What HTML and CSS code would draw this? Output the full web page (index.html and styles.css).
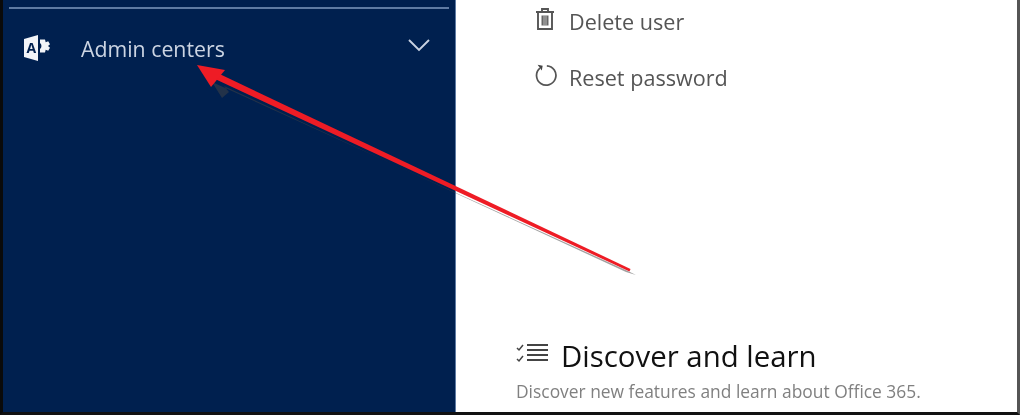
FILE: index.html
```html
<!DOCTYPE html>
<html lang="en">
<head>
<meta charset="utf-8">
<title>Admin centers</title>
<link rel="stylesheet" href="styles.css">
</head>
<body>
<div class="frame">
  <aside class="sidebar">
    <div class="divider"></div>
    <div class="nav-row">
      <svg class="nav-icon" width="30" height="30" viewBox="0 0 30 30">
        <path d="M1 6 L15 2 V28 L1 24 Z" fill="#f2f4f8"/>
        <text x="3.500" y="20" class="a-letter">A</text>
        <path d="M17 6.500h5l.7 2.800 2.500-1 1.800 3-2 1.700 2 1.700-1.800 3-2.500-1-.7 2.800h-5v-3.500a3.800 3.800 0 0 0 0-6z" fill="#f2f4f8"/>
      </svg>
      <span class="nav-label">Admin centers</span>
      <svg class="chevron" width="24" height="14" viewBox="0 0 24 14">
        <path d="M2 2 L12 12 L22 2" fill="none" stroke="#c9d2e2" stroke-width="1.900"/>
      </svg>
    </div>
  </aside>
  <main class="content">
    <ul class="actions">
      <li class="action">
        <span class="action-icon">
          <svg width="22" height="26" viewBox="0 0 22 26">
            <path d="M2 6h18M8 6V3h6v3M4 6v17h14V6" fill="none" stroke="#555" stroke-width="1.900"/>
            <path d="M7.500 9.500h7v10h-7z" fill="#666"/>
            <path d="M10 9.500v10M12 9.500v10" stroke="#ddd" stroke-width=".7"/>
          </svg>
        </span>
        <span>Delete user</span>
      </li>
      <li class="action">
        <span class="action-icon">
          <svg width="26" height="26" viewBox="0 0 26 26">
            <path d="M7.500 5.500A10.500 10.500 0 1 0 15 3" fill="none" stroke="#555" stroke-width="1.900"/>
            <path d="M5 2l5.500 1-1 5z" fill="#444"/>
          </svg>
        </span>
        <span>Reset password</span>
      </li>
    </ul>
    <section class="learn">
      <div class="learn-head">
        <svg width="34" height="24" viewBox="0 0 34 24">
          <path d="M1 6l2 2 4-5M1 17l2 2 4-5" fill="none" stroke="#444" stroke-width="1.500"/>
          <path d="M11 3h21M11 8h21M11 13h21M11 18h21" stroke="#444" stroke-width="2.200"/>
        </svg>
        <h2>Discover and learn</h2>
      </div>
      <p>Discover new features and learn about Office 365.</p>
    </section>
  </main>
</div>
<svg class="arrow" width="1020" height="415" viewBox="0 0 1020 415">
  <path class="arrow-shadow" d="M636 275 L630 272 L212 82 L222 98 L229 92 L224 86 L626 272 Z" fill="#444"/>
  <path d="M630.500 269 L629.500 271.500 L215 79 L217.500 73 Z" fill="#ee1c25"/>
  <path d="M197 65 L225 70 L211 87 Z" fill="#ee1c25"/>
</svg>
</body>
</html>
```
FILE: styles.css
```css
html, body {
  margin: 0;
  height: 100%;
  overflow: hidden;
  background: #fff;
}

body {
  position: relative;
  width: 1020px;
  height: 415px;
}

.frame {
  display: flex;
  box-sizing: border-box;
  width: 1020px;
  height: 415px;
  border-left: 3px solid #0a0a0a;
  border-right: 3px solid #555;
  border-bottom: 3px solid #111;
  font-family: "Open Sans", "Noto Sans", sans-serif;
  filter: blur(0.7px);
}

.sidebar {
  box-sizing: border-box;
  width: 453px;
  padding: 7px 6px 0;
  background: #00204f;
  border-right: 1px solid #5f7ba3;
}

.divider {
  height: 2px;
  background: #5f7ba3;
}

.nav-row {
  display: flex;
  align-items: center;
  margin-top: 24px;
  padding-left: 14px;
  height: 30px;
}

.nav-icon {
  flex: none;
}

.a-letter {
  font: bold 14px "Open Sans", sans-serif;
  fill: #00204f;
}

.nav-label {
  margin-left: 28px;
  font-size: 21.300px;
  color: #ccd5e3;
}

.chevron {
  margin-left: auto;
  margin-right: 18px;
  margin-top: -6px;
}

.content {
  display: flex;
  flex: 1;
  flex-direction: column;
  justify-content: space-between;
  background: #fff;
}

.actions {
  margin: 0;
  padding: 6px 0 0 77px;
  list-style: none;
}

.action {
  display: flex;
  align-items: center;
  height: 30px;
  margin-bottom: 26px;
  font-size: 21.600px;
  color: #555;
}

.action-icon {
  display: flex;
  flex: none;
  justify-content: center;
  width: 24px;
  margin-right: 12px;
  margin-top: -4px;
}

.learn {
  padding: 0 0 11px 60px;
}

.learn-head {
  display: flex;
  align-items: center;
  gap: 11px;
}

.learn-head h2 {
  margin: -2px 0 0;
  font-size: 29.400px;
  font-weight: 400;
  line-height: 38px;
  color: #111;
}

.learn-head svg {
  flex: none;
  margin-top: -6px;
}

.learn p {
  margin: 6px 0 0;
  font-size: 17.400px;
  line-height: 20px;
  color: #808080;
}

.arrow {
  position: absolute;
  top: 0;
  left: 0;
  filter: blur(0.7px);
}

.arrow-shadow {
  opacity: 0.5;
}
```
